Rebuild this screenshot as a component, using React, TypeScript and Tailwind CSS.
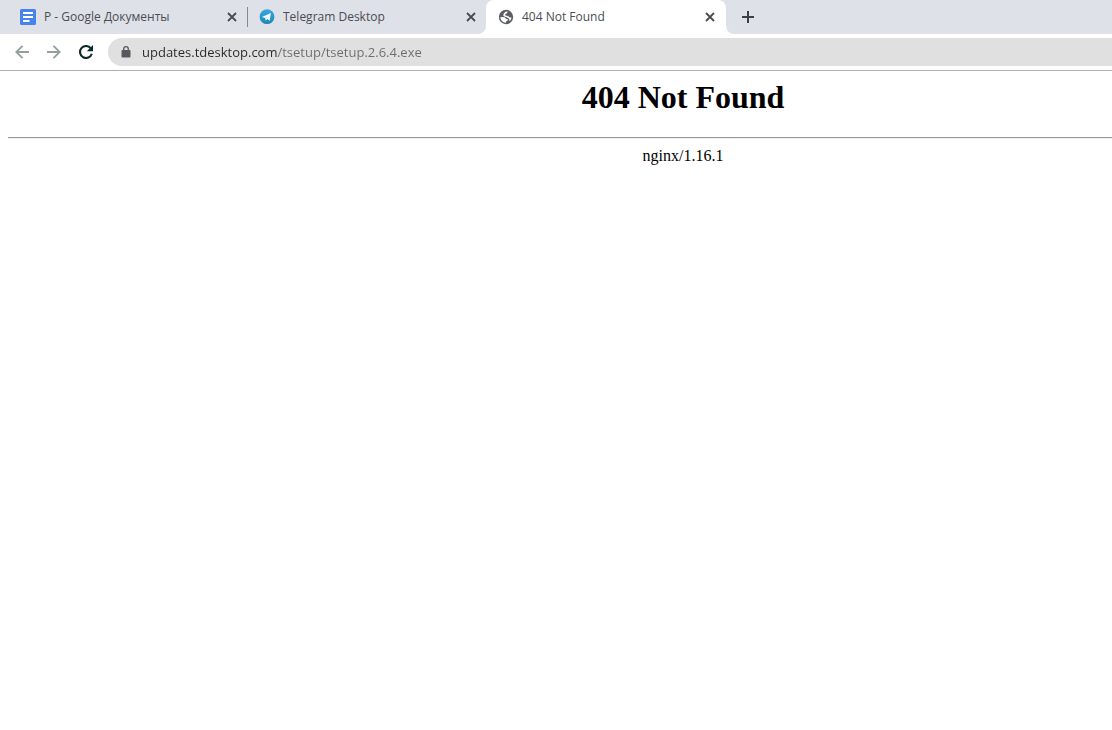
import type { ReactNode } from "react"

const DocsIcon = () => (
    <svg viewBox="0 0 16 16" className="size-4 shrink-0" aria-hidden="true">
        <rect width="16" height="16" rx="1.5" fill="#4683ec" />
        <path d="M3 4h10M3 8h10M3 12h6.500" stroke="#fff" strokeWidth="2" />
    </svg>
)

const TelegramIcon = () => (
    <svg viewBox="0 0 16 16" className="size-4 shrink-0" aria-hidden="true">
        <defs>
            <linearGradient id="tg" x1="0" y1="0" x2="0" y2="1">
                <stop offset="0" stopColor="#38a9de" />
                <stop offset="1" stopColor="#1c86b9" />
            </linearGradient>
        </defs>
        <circle cx="8" cy="7.700" r="7.400" fill="url(#tg)" />
        <path d="M2.800 7.900 11.900 4.100 10.700 11.700 8.200 10.100 6.800 11.500 6.200 9.100z" fill="#f2fafd" />
        <path d="M6.200 9.100 8.800 7.400 7.100 9.600 6.800 11.500z" fill="#b4d8ea" />
    </svg>
)

const GlobeIcon = () => (
    <svg viewBox="0 0 16 16" className="size-4 shrink-0" aria-hidden="true">
        <circle cx="8" cy="8" r="7.200" fill="#5b5e62" />
        <path
            d="M2.400 8H5.400c1.300 0 2.300.8 2.700 1.900l1.700.3v1.300l-1.400.5-.5 1.700C4.800 13.500 2.500 11.200 2.400 8z
               M9.600 2.600 9.200 4 7.400 4.900l-.3 1.400 3.300.9 1.300 1.400 1.800-.1c-.2 1.500-.9 2.800-1.900 3.700l-.4-2.200L9.700 8.700 6.400 7.400 5.200 6.400l.6-1.900 1.700-1.700z"
            fill="#fff"
        />
    </svg>
)

const LockIcon = () => (
    <svg viewBox="0 0 10 12" className="h-3 w-[10px] shrink-0" aria-hidden="true">
        <rect x="0.500" y="4" width="9" height="7.500" rx="1" fill="#56585b" />
        <path d="M2.700 4.500V3a2.300 2.300 0 0 1 4.600 0v1.500" fill="none" stroke="#56585b" strokeWidth="1.300" />
    </svg>
)

const Tab = ({ icon, title, active, divider }: { icon: ReactNode; title: string; active?: boolean; divider?: boolean }) => (
    <div className={active
        ? "relative flex h-full w-60 items-center rounded-t-lg bg-white pr-2 pl-3"
        : "relative flex h-full w-[239px] items-center pr-[7px] pl-3"}
    >
        {divider && <span className="absolute left-0 h-5 w-px bg-[#85888f]" />}
        {/* feet of the active tab */}
        {active && (
            <>
                <span className="absolute bottom-0 -left-2 size-2 bg-white">
                    <span className="block size-full rounded-br-lg bg-[#dee1e8]" />
                </span>
                <span className="absolute -right-2 bottom-0 size-2 bg-white">
                    <span className="block size-full rounded-bl-lg bg-[#dee1e8]" />
                </span>
            </>
        )}
        {icon}
        <span className="ml-2 flex-1 truncate text-[12px] leading-4 text-[#4a4d51]">{title}</span>
        <button type="button" aria-label={"Close " + title} className="flex size-4 items-center justify-center">
            <svg viewBox="0 0 10 10" className="size-[10px]" aria-hidden="true">
                <path d="M1 1 9 9M9 1 1 9" stroke="#484b50" strokeWidth="1.800" />
            </svg>
        </button>
    </div>
)

export default function App() {
    return (
        <div className="min-h-screen overflow-hidden bg-white font-['Open_Sans','Noto_Sans',sans-serif]">
            <header>
                <div className="flex h-[34px] items-center bg-[#dee1e8] pl-2">
                    <Tab icon={<DocsIcon />} title="P - Google Документы" />
                    <Tab icon={<TelegramIcon />} title="Telegram Desktop" divider />
                    <Tab icon={<GlobeIcon />} title="404 Not Found" active />
                    <button type="button" aria-label="New tab" className="ml-2 flex size-7 items-center justify-center">
                        <svg viewBox="0 0 12 12" className="size-3" aria-hidden="true">
                            <path d="M6 0v12M0 6h12" stroke="#3c3f44" strokeWidth="2" />
                        </svg>
                    </button>
                </div>
                <div className="flex items-center border-b border-[#b0b0b0] py-1 pl-3">
                    <div className="flex items-center gap-3">
                        <button type="button" aria-label="Back" className="flex size-5 items-center justify-center">
                            <svg viewBox="0 0 14 14" className="size-[14px]" aria-hidden="true">
                                <path d="M14 7H1.500M7.500 .8 1.300 7l6.200 6.200" fill="none" stroke="#93a09e" strokeWidth="1.800" />
                            </svg>
                        </button>
                        <button type="button" aria-label="Forward" className="flex size-5 items-center justify-center">
                            <svg viewBox="0 0 14 14" className="size-[14px]" aria-hidden="true">
                                <path d="M0 7h12.500M6.500 .8 12.700 7l-6.200 6.200" fill="none" stroke="#93a09e" strokeWidth="1.800" />
                            </svg>
                        </button>
                        <button type="button" aria-label="Reload" className="flex size-5 items-center justify-center">
                            <svg viewBox="0 0 14 14" className="size-[14px]" aria-hidden="true">
                                <path d="M11.700 3.200A6 6 0 1 0 12.800 8.800" fill="none" stroke="#0d2a2a" strokeWidth="2.100" />
                                <path d="M14 0v6.200H7.800z" fill="#0d2a2a" />
                            </svg>
                        </button>
                    </div>
                    <div className="ml-3 flex h-7 flex-1 items-center gap-[11px] rounded-l-full bg-[#e0e0e0] pl-[13px]">
                        <LockIcon />
                        {/* the host is darker than the path */}
                        <input
                            type="text"
                            aria-label="Address"
                            spellCheck={false}
                            defaultValue="updates.tdesktop.com/tsetup/tsetup.2.6.4.exe"
                            className="min-w-0 flex-1 bg-[linear-gradient(to_right,#26282b_136px,#6a6d70_136px)] bg-clip-text text-[13px] leading-5 text-transparent caret-black outline-none"
                        />
                    </div>
                </div>
            </header>
            <main className="pt-2 pl-2 font-['Liberation_Serif',serif] text-black">
                <h1 className="pl-[246px] text-center text-[32px] leading-9 font-bold">404 Not Found</h1>
                <hr className="mt-[22px] border-t border-b border-t-[#9a9a9a] border-b-[#eeeeee]" />
                <p className="mt-2 pl-[246px] text-center text-[16px] leading-[18px]">nginx/1.16.1</p>
            </main>
        </div>
    )
}
